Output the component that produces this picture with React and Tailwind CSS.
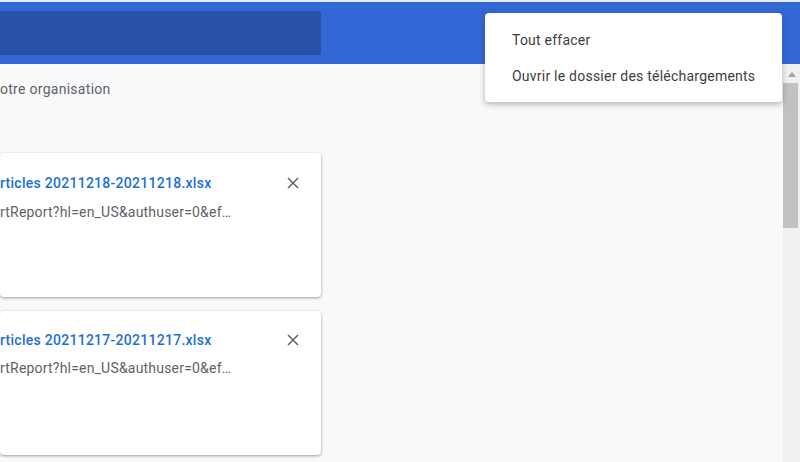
const downloads = [
  { name: "rticles 20211218-20211218.xlsx", cardTop: "pt-[21px]", urlGap: "mt-[10px]" },
  { name: "rticles 20211217-20211217.xlsx", cardTop: "pt-[20px]", urlGap: "mt-[9px]" },
];

const CloseIcon = () => (
  <svg className="h-[12px] w-[12px]" viewBox="0 0 12 12" fill="none" stroke="#5f6368" strokeWidth="1.5">
    <path d="M1 1l10 10M11 1L1 11" />
  </svg>
);

const DownloadCard = ({ name, cardTop, urlGap }) => (
  <div className={`${cardTop} h-[144px] w-[321px] rounded-[4px] bg-white shadow-[0_1px_3px_rgba(60,64,67,0.5)]`}>
    <div className="flex h-[18px] items-center justify-between pr-[22.5px]">
      <div className="whitespace-nowrap text-[14px] font-medium tracking-[0.27px] text-[#1b6fd6]">{name}</div>
      <CloseIcon />
    </div>
    <div className={`${urlGap} whitespace-nowrap text-[14px] tracking-[0.2px] text-[#5f6368]`}>
      rtReport?hl=en_US&amp;authuser=0&amp;ef…
    </div>
  </div>
);

export default function App() {
  return (
    <div className="relative flex h-[462px] w-[800px] flex-col overflow-hidden bg-[#f8f9fa] font-['Roboto',sans-serif]">
      <div className="h-[2px] bg-[#e8eaed]" />
      <header className="flex h-[62px] items-center bg-[#3367d6]">
        <div className="h-[44px] w-[321px] rounded-r-[2px] bg-[#2a51a8]" />
      </header>

      <div className="flex min-h-0 flex-1">
        <main className="min-w-0 flex-1">
          <div className="flex h-[49px] items-center whitespace-nowrap pt-[1px] text-[14px] tracking-[0.28px] text-[#5f6368]">
            otre organisation
          </div>
          <div className="mt-[40px] flex flex-col gap-[14px]">
            {downloads.map((d) => (
              <DownloadCard key={d.name} name={d.name} cardTop={d.cardTop} urlGap={d.urlGap} />
            ))}
          </div>
        </main>

        <div className="flex w-[17px] flex-col bg-[#f1f1f1]">
          <div className="flex h-[19px] items-center justify-center pt-[2px]">
            <div className="h-0 w-0 border-x-[4px] border-b-[5px] border-x-transparent border-b-[#a3a3a3]" />
          </div>
          <div className="h-[145px] w-[15px] bg-[#c1c1c1]" />
        </div>
      </div>

      <div className="absolute left-[485px] top-[13px] flex h-[89px] w-[297px] flex-col rounded-[4px] bg-white pt-[9px] text-[14px] tracking-[0.23px] text-[#3c4043] shadow-[0_2px_6px_rgba(60,64,67,0.4)]">
        <div className="flex h-[36px] items-center pl-[27px]">Tout effacer</div>
        <div className="flex h-[36px] items-center pl-[27px]">Ouvrir le dossier des téléchargements</div>
      </div>
    </div>
  );
}
